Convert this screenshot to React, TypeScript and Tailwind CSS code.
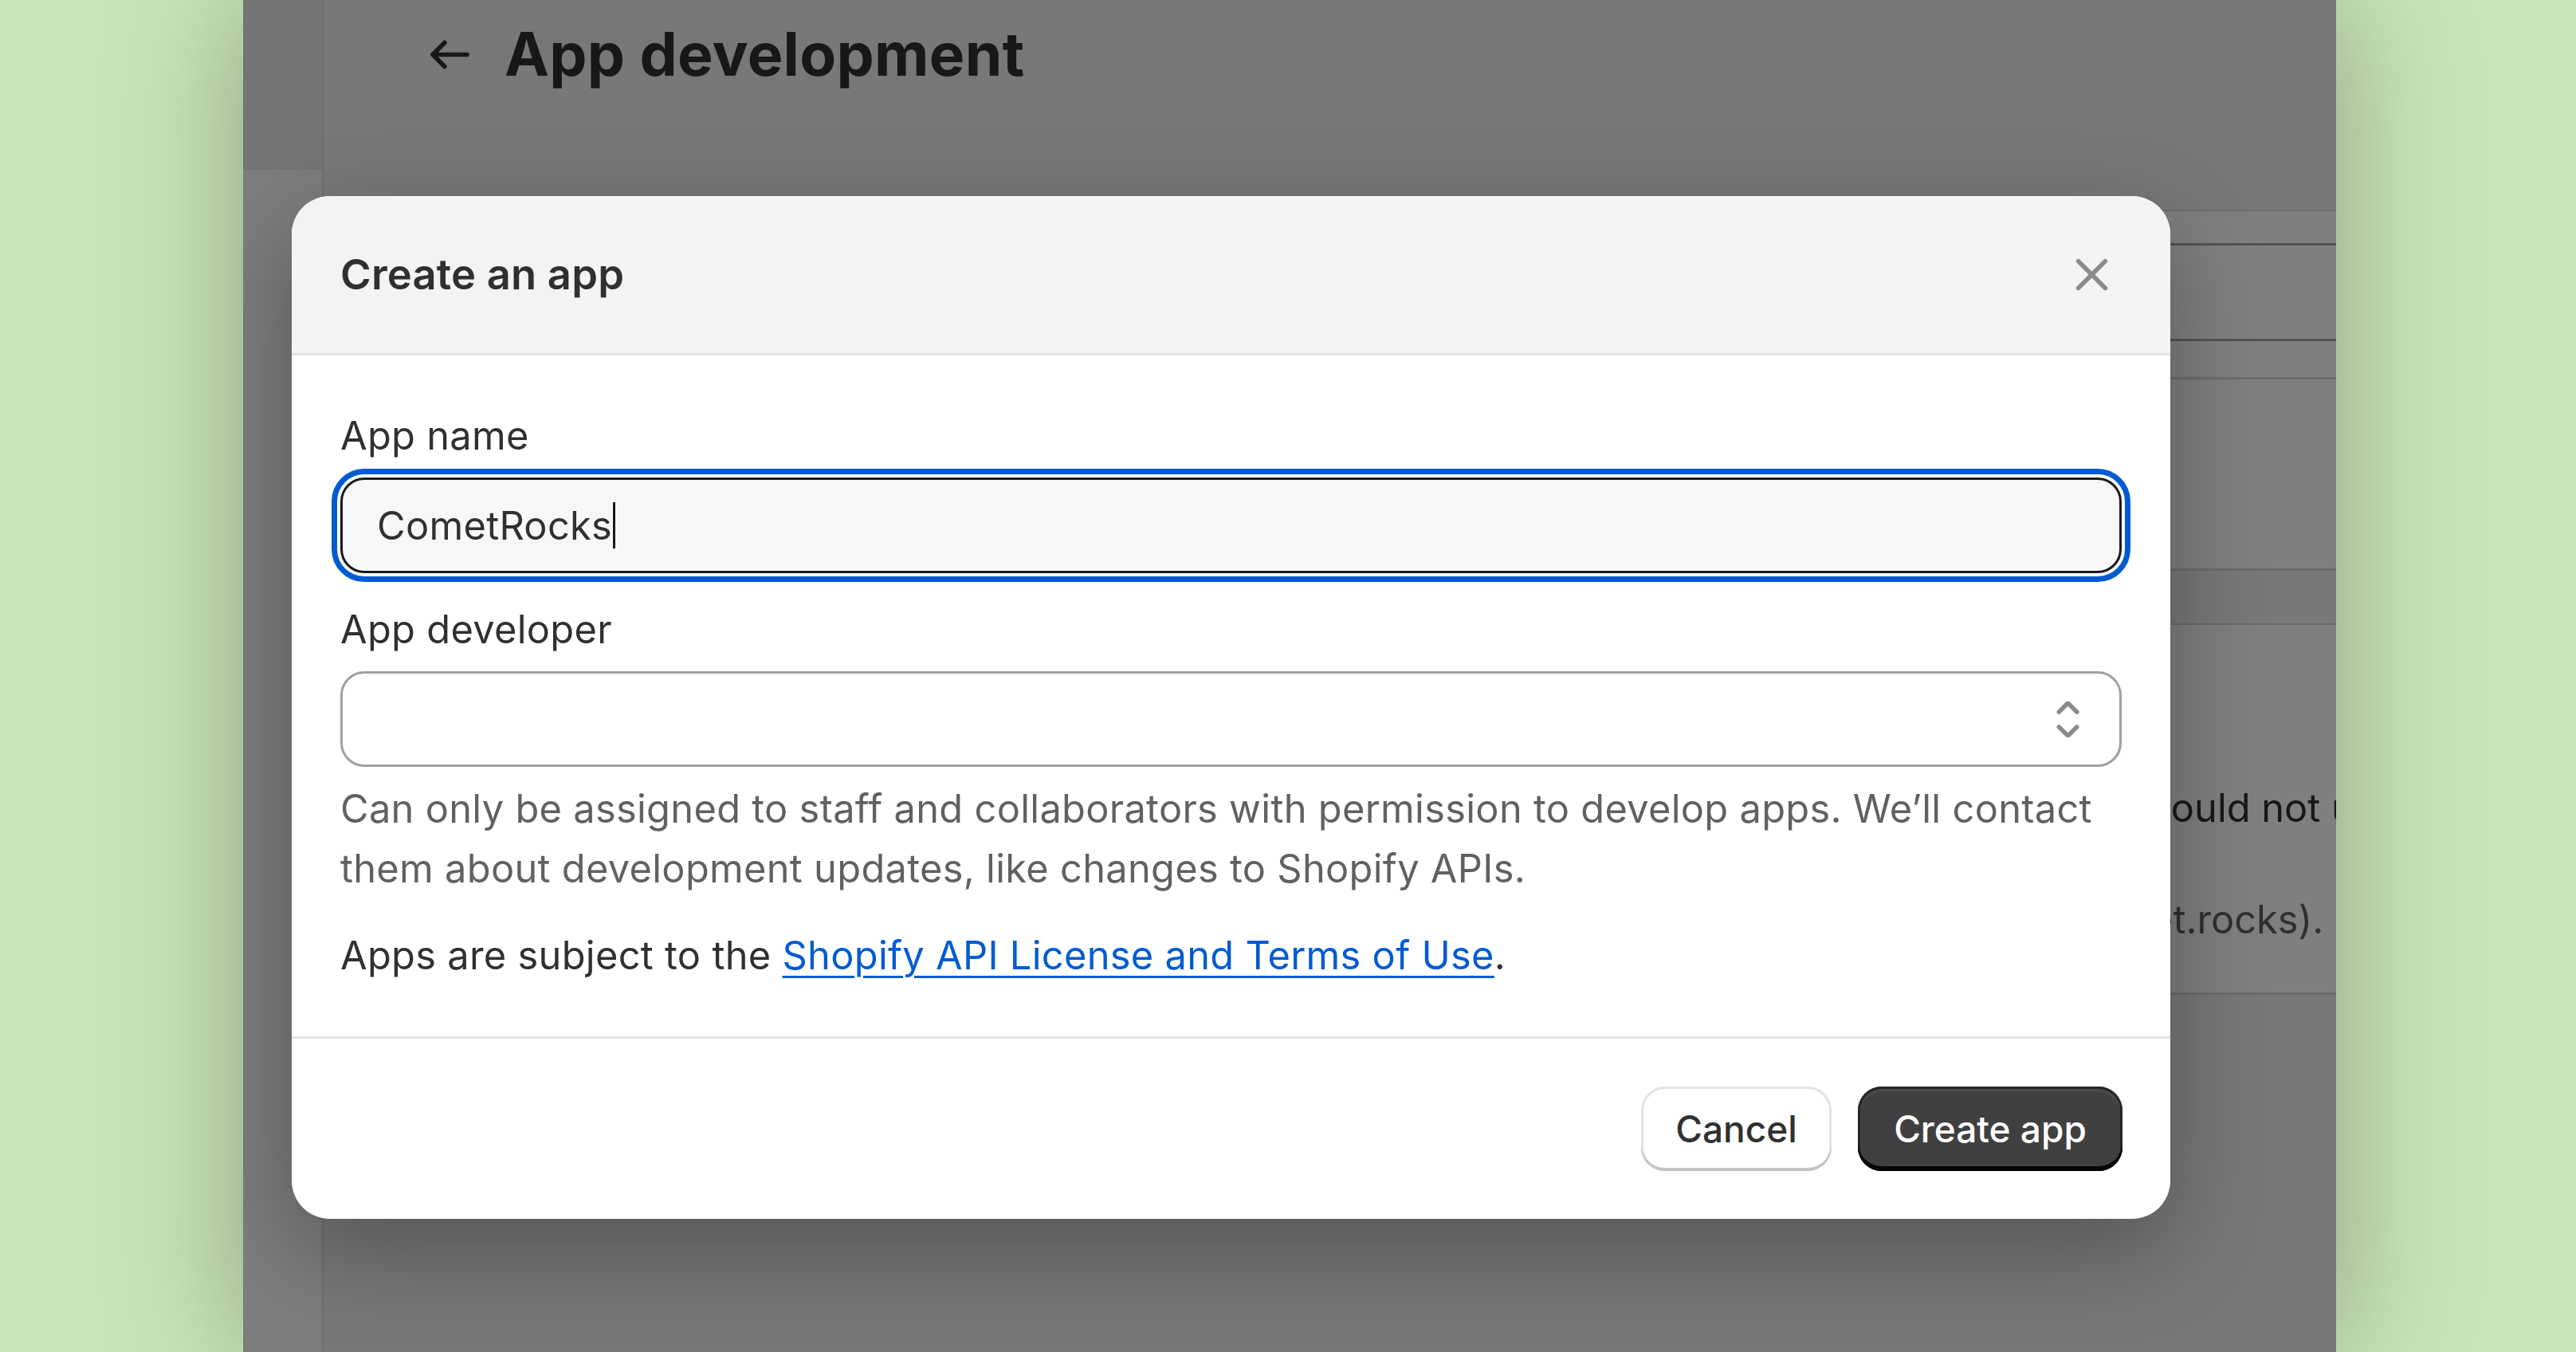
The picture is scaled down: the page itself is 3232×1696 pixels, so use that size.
import React from 'react';

function ArrowLeftIcon() {
    return (
        <svg viewBox="0 0 20 20" className="h-[75px] w-[75px] shrink-0" fill="#303030">
            <path d="M16.5 10a.75.75 0 0 1-.75.75h-9.69l2.72 2.72a.75.75 0 0 1-1.06 1.06l-4-4a.75.75 0 0 1 0-1.06l4-4a.75.75 0 0 1 1.06 1.06l-2.72 2.72h9.690a.75.75 0 0 1 .75.75Z" />
        </svg>
    );
}

function CloseIcon() {
    return (
        <svg viewBox="0 0 20 20" className="h-[75px] w-[75px]" fill="#8a8a8a">
            <path d="M13.97 15.03a.75.75 0 1 0 1.06-1.06l-3.97-3.97 3.97-3.970a.75.75 0 0 0-1.06-1.06l-3.97 3.97-3.97-3.97a.75.75 0 0 0-1.06 1.06l3.97 3.97-3.97 3.97a.75.75 0 1 0 1.06 1.06l3.97-3.97 3.97 3.97Z" />
        </svg>
    );
}

function SelectIcon() {
    return (
        <svg viewBox="0 0 20 20" className="h-[75px] w-[75px]" fill="#8a8a8a">
            <path d="M10.884 4.323a1.25 1.25 0 0 0-1.768 0l-2.646 2.647a.75.75 0 0 0 1.06 1.06l2.47-2.47 2.47 2.47a.75.75 0 1 0 1.06-1.06l-2.646-2.647Z" />
            <path d="m13.53 13.03-2.646 2.647a1.25 1.25 0 0 1-1.768 0l-2.646-2.647a.75.75 0 0 1 1.06-1.06l2.47 2.47 2.47-2.47a.75.75 0 0 1 1.06 1.06Z" />
        </svg>
    );
}

function CreateAppModal() {
    return (
        <div className="absolute left-[61px] top-[246px] w-[2357px] overflow-hidden rounded-[48px] bg-white shadow-[0_40px_120px_rgba(0,0,0,0.3)]">
            {/* Header */}
            <div className="flex h-[200px] items-center justify-between border-b-[3px] border-[#e3e3e3] bg-[#f3f3f3] px-[61px]">
                <h2 className="text-[52.5px] font-semibold leading-[75px] tracking-[0.2px] text-[#303030]">Create an app</h2>
                <button type="button" className="flex h-[75px] w-[75px] items-center justify-center">
                    <CloseIcon />
                </button>
            </div>

            {/* Body */}
            <div className="px-[61px] pb-[64px] pt-[63px] text-[48.75px] leading-[75px] tracking-[0.3px] text-[#303030]">
                <label className="block">App name</label>
                <div className="mt-[15px] flex h-[120px] items-center rounded-[30px] border-[3px] border-[#1a1a1a] bg-[#f7f7f7] pl-[43px] outline-solid outline-[7px] outline-offset-[4px] outline-[#005bd3]">
                    <span>CometRocks</span>
                    <span className="ml-[1px] inline-block h-[58px] w-[3px] bg-[#1a1a1a]" />
                </div>

                <label className="mt-[33px] block">App developer</label>
                <div className="mt-[15px] flex h-[120px] items-center justify-end rounded-[30px] border-[3px] border-[#a0a0a0] bg-white pr-[27px]">
                    <SelectIcon />
                </div>

                <p className="mt-[15px] text-[#616161]">
                    <span className="block whitespace-nowrap">Can only be assigned to staff and collaborators with permission to develop apps. We’ll contact</span>
                    <span className="block whitespace-nowrap">them about development updates, like changes to Shopify APIs.</span>
                </p>

                <p className="mt-[34px]">
                    Apps are subject to the{' '}
                    <a href="#" className="text-[#005bd3] underline decoration-[3px] underline-offset-[8px]">
                        Shopify API License and Terms of Use
                    </a>
                    .
                </p>
            </div>

            {/* Footer */}
            <div className="flex justify-end gap-[33px] border-t-[3px] border-[#e3e3e3] px-[60px] py-[60px]">
                <button
                    type="button"
                    className="h-[106px] w-[239px] rounded-[30px] bg-white text-[46px] font-medium text-[#303030] shadow-[inset_0_-4px_0_#c4c4c4,inset_0_0_0_3px_#e3e3e3]"
                >
                    Cancel
                </button>
                <button
                    type="button"
                    className="h-[106px] w-[332px] rounded-[30px] bg-[#404040] text-[46px] font-medium text-white shadow-[inset_0_-6px_0_#050505,inset_0_0_0_3px_#262626,inset_0_4px_0_3px_rgba(255,255,255,0.06)]"
                >
                    Create app
                </button>
            </div>
        </div>
    );
}

export default function App() {
    return (
        <div className="relative h-[1696px] w-[3232px] overflow-hidden bg-[#c9e5b8] [font-family:Inter,'Noto_Sans',sans-serif]">
            <div className="absolute left-[305px] top-0 h-[1696px] w-[2626px] overflow-hidden bg-[#f1f1f1] shadow-[0_0_160px_rgba(0,0,0,0.3)]">
                <div className="flex h-full">
                    <aside className="flex w-[101px] shrink-0 flex-col border-r-2 border-[#dcdcdc]">
                        <div className="h-[213px] bg-[#ebebeb]" />
                        <div className="flex-1 bg-[#fafafa]" />
                    </aside>

                    <main className="flex-1 pl-[121px]">
                        <div className="mt-[23px] flex h-[90px] items-center gap-[31px]">
                            <ArrowLeftIcon />
                            <h1 className="whitespace-nowrap text-[75px] font-bold leading-[90px] tracking-[0.3px] text-[#303030]">App development</h1>
                        </div>

                        <section className="mt-[150px] h-[453px] w-[2600px] border-b-[3px] border-t-2 border-[#d6d6d6] bg-white pt-[40px]">
                            <div className="h-[123px] border-y-[3px] border-[#a8a8a8]" />
                            <div className="mt-[45px] h-[3px] bg-[#dcdcdc]" />
                        </section>

                        <section className="mt-[66px] h-[466px] w-[2600px] border-b-[3px] border-t-2 border-[#d6d6d6] bg-white pt-[192px] text-[48.75px] leading-[75px]">
                            <p className="ml-[2169px] whitespace-nowrap text-[#303030]">could not use this app</p>
                            <p className="ml-[2054px] mt-[65px] whitespace-nowrap text-[#616161]">(comet.rocks).</p>
                        </section>
                    </main>
                </div>

                <div className="absolute inset-0 bg-black/50" />
                <CreateAppModal />
            </div>
        </div>
    );
}
